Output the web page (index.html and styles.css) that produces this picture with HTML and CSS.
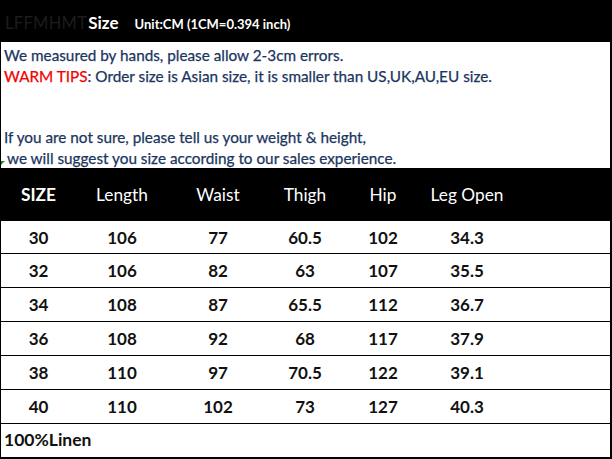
FILE: index.html
```html
<!DOCTYPE html>
<html>
<head>
<meta charset="utf-8">
<link rel="stylesheet" href="styles.css">
</head>
<body>
<div class="sheet">
  <div class="top">
    <span class="brand">LFFMHMT</span><span class="size">Size</span><span class="unit">Unit:CM (1CM=0.394 inch)</span>
  </div>
  <div class="notes">
    <div class="line">We measured by hands, please allow 2-3cm errors.</div>
    <div class="line"><span class="warm">WARM TIPS</span>: Order size is Asian size, it is smaller than US,UK,AU,EU size.</div>
    <div class="line"></div>
    <div class="line"></div>
    <div class="line">If you are not sure, please tell us your weight &amp; height,</div>
    <div class="line indent">we will suggest you size according to our sales experience.</div>
    <span class="tick"></span>
  </div>
  <div class="table">
    <div class="row head">
      <div class="c b">SIZE</div><div class="c">Length</div><div class="c">Waist</div><div class="c">Thigh</div><div class="c">Hip</div><div class="c">Leg Open</div><div class="c"></div>
    </div>
    <div class="row"><div class="c">30</div><div class="c">106</div><div class="c">77</div><div class="c">60.5</div><div class="c">102</div><div class="c">34.3</div><div class="c"></div></div>
    <div class="row"><div class="c">32</div><div class="c">106</div><div class="c">82</div><div class="c">63</div><div class="c">107</div><div class="c">35.5</div><div class="c"></div></div>
    <div class="row"><div class="c">34</div><div class="c">108</div><div class="c">87</div><div class="c">65.5</div><div class="c">112</div><div class="c">36.7</div><div class="c"></div></div>
    <div class="row"><div class="c">36</div><div class="c">108</div><div class="c">92</div><div class="c">68</div><div class="c">117</div><div class="c">37.9</div><div class="c"></div></div>
    <div class="row"><div class="c">38</div><div class="c">110</div><div class="c">97</div><div class="c">70.5</div><div class="c">122</div><div class="c">39.1</div><div class="c"></div></div>
    <div class="row"><div class="c">40</div><div class="c">110</div><div class="c">102</div><div class="c">73</div><div class="c">127</div><div class="c">40.3</div><div class="c"></div></div>
    <div class="foot">100%Linen</div>
  </div>
</div>
</body>
</html>
```
FILE: styles.css
```css
* { box-sizing: border-box; }
html, body { margin: 0; padding: 0; background: #000; }
body { width: 612px; height: 459px; overflow: hidden; font-family: Lato, "Open Sans", sans-serif; }
.sheet { width: 612px; height: 459px; background: #000; }
.top {
  height: 42px;
  display: flex;
  align-items: baseline;
  padding: 12px 0 0 5px;
  white-space: nowrap;
}
.brand { color: #1c1c1c; font-size: 16.5px; font-weight: 400; letter-spacing: 0.3px; }
.size { color: #fff; font-size: 17px; font-weight: 700; margin-left: 1px; }
.unit { color: #fff; font-size: 13px; font-weight: 700; margin-left: 16px; }
.notes {
  position: relative;
  height: 126px;
  margin: 0 2px 0 1px;
  background: #fff;
  padding: 3px 0 0 3px;
  color: #1a355e;
  font-size: 15.3px;
  -webkit-text-stroke: 0.25px currentColor;
}
.line { height: 20.6px; line-height: 20.6px; white-space: nowrap; }
.indent { padding-left: 3px; }
.warm { color: #f20000; }
.tick {
  position: absolute; left: 0; top: 119px;
  width: 0; height: 0;
  border-top: 4px solid #2b8a2b; border-right: 4px solid transparent;
}
.table { margin: 0 2px 0 1px; }
.row {
  display: grid;
  grid-template-columns: 75px 92px 100px 74px 82px 86px 1fr;
  height: 34px;
  background: #fff;
  border-bottom: 1px solid #000;
  align-items: center;
  font-weight: 700;
  font-size: 17px;
  color: #111;
}
.row.head {
  height: 53px;
  background: #000;
  color: #fff;
  font-weight: 400;
  font-size: 17.3px;
  border-bottom: 0;
}
.row:nth-child(2) { height: 33px; }
.c { text-align: center; }
.head .b { font-weight: 700; }
.foot {
  height: 34px;
  background: #fff;
  padding-left: 3px;
  line-height: 31px;
  font-weight: 700;
  font-size: 17.5px;
  color: #111;
  border-bottom: 1px solid #000;
}
```
